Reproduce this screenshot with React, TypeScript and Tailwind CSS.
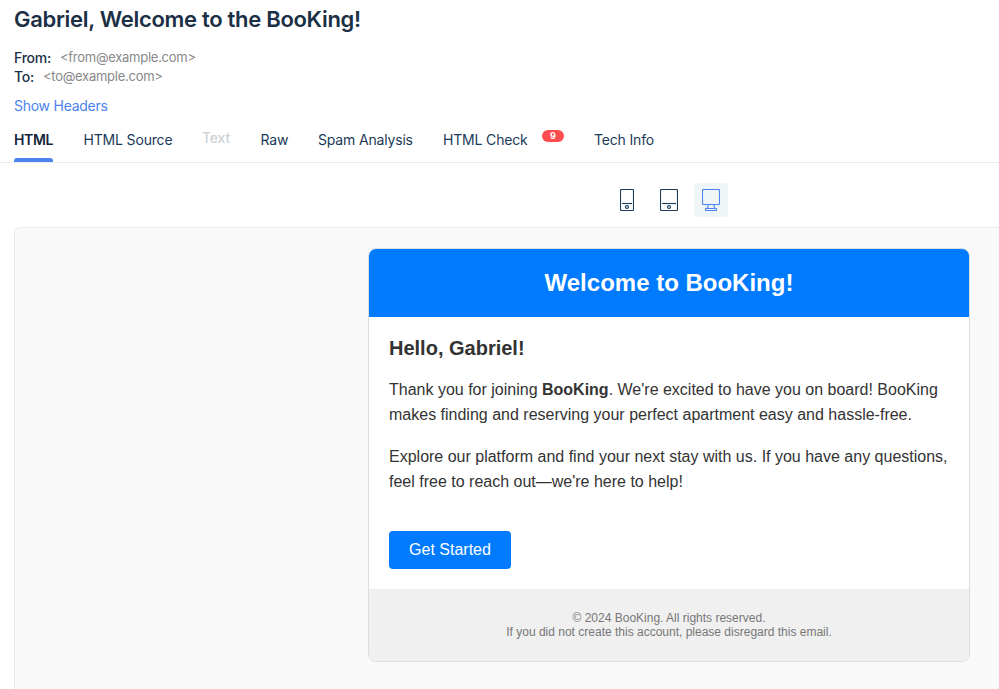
import React from "react";

const tab = "block h-[42px] shrink-0 pt-[10px] text-[14px] leading-5 tracking-[-0.17px]";

function PhoneIcon() {
  return (
    <svg width="14" height="22" viewBox="0 0 14 22" fill="none" stroke="#1b3a57" strokeWidth="1.1">
      <rect x=".5" y=".5" width="13" height="21" rx="1" />
      <path d="M2 14.5h10" />
      <circle cx="7" cy="18" r="1.5" fill="#d5dbe1" />
    </svg>
  );
}

function TabletIcon() {
  return (
    <svg width="18" height="22" viewBox="0 0 18 22" fill="none" stroke="#1b3a57" strokeWidth="1.1">
      <rect x=".5" y=".5" width="17" height="21" rx="1" />
      <path d="M2 14.5h14" />
      <circle cx="9" cy="18" r="1.5" fill="#d5dbe1" />
    </svg>
  );
}

function DesktopIcon() {
  return (
    <svg width="18" height="22" viewBox="0 0 18 22" fill="none" stroke="#4c83ee" strokeWidth="1.1">
      <rect x=".5" y=".5" width="17" height="15" rx="1" />
      <path d="M6 16v1.500l-1 2M12 16v1.500l1 2" />
      <rect x="3.5" y="19.500" width="11" height="2" rx=".5" />
    </svg>
  );
}

export default function App() {
  return (
    <div className="flex h-[689px] w-[999px] flex-col overflow-hidden bg-white font-['Inter',sans-serif] text-[#1b2f45]">
      <header className="pl-[14px]">
        <h1 className="pt-[5px] text-[22px] leading-7 font-semibold tracking-[-0.3px]">
          Gabriel, Welcome to the BooKing!
        </h1>
        <div className="mt-[15px] text-[14px] leading-[19px]">
          <div className="flex gap-[9px]">
            <span className="font-medium tracking-[-0.25px]">From:</span>
            <span className="text-[13px] tracking-[-0.26px] text-[#888]">&lt;from@example.com&gt;</span>
          </div>
          <div className="flex gap-[9px]">
            <span className="font-medium tracking-[-0.25px]">To:</span>
            <span className="text-[13px] tracking-[-0.26px] text-[#888]">&lt;to@example.com&gt;</span>
          </div>
        </div>
        <a className="mt-[10px] block text-[14px] leading-5 tracking-[-0.26px] text-[#4c83ee]">Show Headers</a>
      </header>

      <nav className="mt-[4px] flex h-[43px] shrink-0 border-b border-[#ebebeb] pl-[14px] text-[#1b3a57]">
        <div className="mr-[30.500px] flex w-[39px] flex-col justify-between">
          <span className="pt-[10px] text-[14px] leading-5 font-semibold tracking-[-0.35px] text-[#14233a]">HTML</span>
          <span className="h-1 rounded-t-[3px] bg-[#4c83ee]" />
        </div>
        <span className={`${tab} w-[118.500px]`}>HTML Source</span>
        <span className="block w-[58.500px] pt-2 text-[14px] leading-5 font-medium tracking-[-0.2px] text-[#cdd2d7]">Text</span>
        <span className={`${tab} w-[57.500px]`}>Raw</span>
        <span className={`${tab} w-[125px]`}>Spam Analysis</span>
        <span className={`${tab} w-[99px]`}>HTML Check</span>
        <span className="mt-[10px] mr-[30px] h-3 w-[22px] rounded-full bg-[#ff4d4f] text-center text-[9px] leading-3 font-bold text-white">9</span>
        <span className={tab}>Tech Info</span>
      </nav>

      <div className="flex h-16 shrink-0 items-start gap-2 pt-5 pl-[610px]">
        <div className="flex h-[34px] w-[34px] items-center justify-center"><PhoneIcon /></div>
        <div className="flex h-[34px] w-[34px] items-center justify-center"><TabletIcon /></div>
        <div className="flex h-[34px] w-[34px] items-center justify-center rounded bg-[#f0f6f7]"><DesktopIcon /></div>
      </div>

      <main className="ml-[14px] flex-1 rounded-tl-md border-t border-l border-[#ebebeb] bg-[#f9f9f9] pt-5 pl-[353px] font-['Liberation_Sans',sans-serif] text-[#333]">
        <article className="h-[414px] w-[602px] overflow-hidden rounded-lg border border-[#ddd] bg-white">
          <div className="flex h-[68px] items-center justify-center bg-[#007bff] text-[24px] font-bold text-white">
            Welcome to BooKing!
          </div>
          <div className="h-[272px] px-5 pt-5">
            <h2 className="text-[20px] leading-[23px] font-bold">Hello, Gabriel!</h2>
            <p className="mt-[17px] text-[16px] leading-[25px]">
              Thank you for joining <strong>BooKing</strong>. We're excited to have you on board! BooKing<br />
              makes finding and reserving your perfect apartment easy and hassle-free.
            </p>
            <p className="mt-[17px] text-[16px] leading-[25px]">
              Explore our platform and find your next stay with us. If you have any questions,<br />
              feel free to reach out—we're here to help!
            </p>
            <button className="mt-[37px] block h-[38px] w-[122px] rounded bg-[#007bff] text-[16px] text-white">Get Started</button>
          </div>
          <footer className="h-[72px] bg-[#f0f0f0] pt-[22px] text-center text-[12px] leading-[14px] text-[#777]">
            © 2024 BooKing. All rights reserved.<br />
            If you did not create this account, please disregard this email.
          </footer>
        </article>
      </main>
    </div>
  );
}
